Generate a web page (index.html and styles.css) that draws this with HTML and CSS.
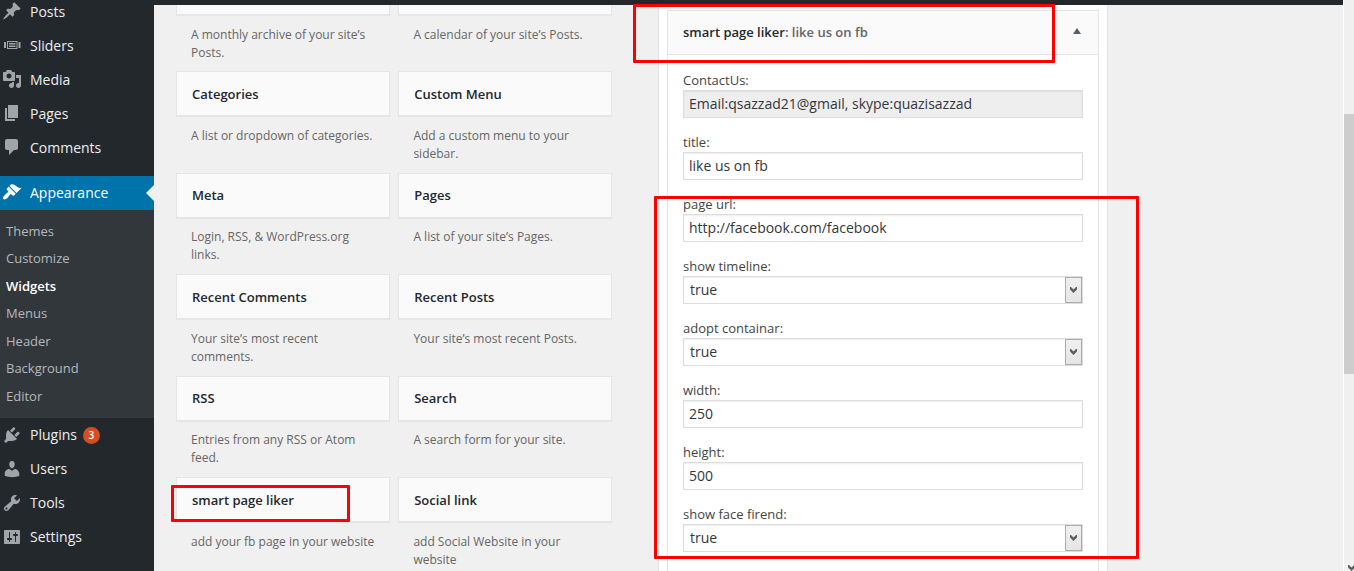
FILE: index.html
```
<!DOCTYPE html>
<html lang="en">
<head>
<meta charset="utf-8">
<title>Widgets</title>
<link rel="stylesheet" href="styles.css">
</head>
<body>
<div class="page">
  <nav class="sidebar">
    <ul class="menu upper">
      <li class="item"><svg viewBox="0 0 20 20"><path d="M10.44 3.02l1.82-1.82 6.36 6.35-1.83 1.82c-1.05-.68-2.48-.57-3.41.36l-.75.75c-.92.93-1.04 2.35-.35 3.41l-1.83 1.82-2.41-2.41-2.8 2.79c-.42.42-3.38 2.71-3.8 2.29s1.86-3.39 2.28-3.81l2.79-2.79L4.1 9.36l1.83-1.82c1.05.69 2.48.57 3.4-.36l.75-.75c.93-.92 1.05-2.35.36-3.41z"/></svg><span>Posts</span></li>
      <li class="item"><svg viewBox="0 0 20 20"><path fill-rule="evenodd" d="M2 7h2v6H2zM16.500 7h2v6h-2zM5 6h10.500v8H5zM6 7v6h8.500V7zM7 8h6.500v1H7zM7 9.500h6.500v1H7zM7 11h6.500v1H7z"/></svg><span>Sliders</span></li>
      <li class="item"><svg viewBox="0 0 20 20"><path d="M13 11V4c0-.55-.45-1-1-1h-1.670L9 1H5L3.670 3H2c-.55 0-1 .45-1 1v7c0 .55.45 1 1 1h10c.55 0 1-.45 1-1zM7 4.500c1.380 0 2.500 1.120 2.500 2.500S8.380 9.500 7 9.500 4.500 8.380 4.500 7 5.620 4.500 7 4.500zM14 6h5v10.500c0 1.380-1.120 2.500-2.500 2.500S14 17.880 14 16.500s1.120-2.500 2.500-2.500c.17 0 .34.02.5.05V9h-3V6zm-4 8.050V13h2v3.500c0 1.380-1.120 2.500-2.500 2.500S7 17.880 7 16.500 8.120 14 9.500 14c.17 0 .34.02.5.05z"/></svg><span>Media</span></li>
      <li class="item"><svg viewBox="0 0 20 20"><path d="M6 15V2h10v13H6zm-1 1h8v2H3V5h2v11z"/></svg><span>Pages</span></li>
      <li class="item"><svg viewBox="0 0 20 20"><path d="M5 2h9c1.100 0 2 .9 2 2v7c0 1.100-.9 2-2 2h-2l-5 5v-5H5c-1.100 0-2-.9-2-2V4c0-1.100.9-2 2-2z"/></svg><span>Comments</span></li>
      <li class="item current"><svg viewBox="0 0 20 20"><path d="M14.480 11.060L7.410 3.990l1.500-1.500c.5-.56 2.300-.47 3.510.32 1.210.8 1.430 1.280 2.910 2.100 1.180.64 2.450 1.260 4.450.85zm-.71.71L6.700 4.700 4.930 6.470c-.39.39-.39 1.020 0 1.410l1.060 1.060c.39.39.39 1.030 0 1.420-.6.6-1.430 1.110-2.210 1.690-.35.26-.7.53-1.010.84C1.430 14.230.4 16.080 1.400 17.070c.99 1 2.840-.03 4.180-1.360.31-.31.58-.66.85-1.020.57-.78 1.080-1.610 1.690-2.210.39-.39 1.020-.39 1.410 0l1.060 1.060c.39.39 1.020.39 1.410 0z"/></svg><span>Appearance</span><i class="notch"></i></li>
    </ul>
    <ul class="submenu">
      <li>Themes</li><li>Customize</li><li class="active">Widgets</li><li>Menus</li><li>Header</li><li>Background</li><li>Editor</li>
    </ul>
    <ul class="menu lower">
      <li class="item"><svg viewBox="0 0 20 20"><path d="M13.110 4.360L9.870 7.600 8 5.730l3.240-3.240c.35-.34 1.050-.2 1.560.32.52.51.66 1.210.31 1.550zm-8 1.770l.91-1.120 9.010 9.010-1.190.84c-.71.71-2.630 1.160-3.820 1.160H6.140L4.900 17.260c-.59.59-1.540.59-2.120 0-.59-.58-.59-1.530 0-2.120l1.240-1.240v-3.880c0-1.130.4-3.190 1.090-3.890zm7.260 3.970l3.240-3.240c.34-.35 1.040-.21 1.550.31.52.51.66 1.210.31 1.550l-3.240 3.250z"/></svg><span>Plugins</span><b class="count">3</b></li>
      <li class="item"><svg viewBox="0 0 20 20"><path d="M10 9.250c-2.270 0-2.730-3.440-2.730-3.440C7 4.020 7.820 2 9.970 2c2.160 0 2.980 2.020 2.710 3.810 0 0-.41 3.440-2.680 3.440zm0 2.570L12.720 10c2.390 0 4.520 2.330 4.520 4.530v2.490s-3.650 1.130-7.240 1.130c-3.650 0-7.240-1.130-7.240-1.130v-2.490c0-2.250 1.940-4.480 4.470-4.480z"/></svg><span>Users</span></li>
      <li class="item"><svg viewBox="0 0 20 20"><path d="M16.680 9.770c-1.340 1.340-3.300 1.670-4.950.99l-5.410 6.520c-.99.99-2.590.99-3.580 0s-.99-2.590 0-3.570l6.520-5.420c-.68-1.650-.35-3.610.99-4.950 1.280-1.280 3.120-1.620 4.720-1.060l-2.890 2.890 2.820 2.820 2.860-2.870c.53 1.580.18 3.390-1.080 4.650zM3.810 16.210c.4.39 1.040.39 1.430 0 .4-.4.4-1.040 0-1.430-.39-.4-1.030-.4-1.430 0-.39.39-.39 1.030 0 1.430z"/></svg><span>Tools</span></li>
      <li class="item"><svg viewBox="0 0 20 20"><path d="M18 16V4c0-.55-.45-1-1-1H3c-.55 0-1 .45-1 1v12c0 .55.45 1 1 1h14c.55 0 1-.45 1-1zM8 11h1c.55 0 1 .45 1 1s-.45 1-1 1H8v1.500c0 .28-.22.5-.5.5s-.5-.22-.5-.5V13H6c-.55 0-1-.45-1-1s.45-1 1-1h1V5.500c0-.28.22-.5.5-.5s.5.22.5.5V11zm5-2h-1c-.55 0-1-.45-1-1s.45-1 1-1h1V5.500c0-.28.22-.5.5-.5s.5.22.5.5V7h1c.55 0 1 .45 1 1s-.45 1-1 1h-1v5.500c0 .28-.22.5-.5.5s-.5-.22-.5-.5V9z"/></svg><span>Settings</span></li>
    </ul>
  </nav>
  <div class="body">
    <div class="topbar"></div>
    <div class="content">
      <section class="available">
        <div class="widget"><h3></h3><p>A monthly archive of your site’s<br>Posts.</p></div>
        <div class="widget"><h3></h3><p>A calendar of your site’s Posts.</p></div>
        <div class="widget"><h3>Categories</h3><p>A list or dropdown of categories.</p></div>
        <div class="widget"><h3>Custom Menu</h3><p>Add a custom menu to your<br>sidebar.</p></div>
        <div class="widget raised"><h3>Meta</h3><p>Login, RSS, &amp; WordPress.org<br>links.</p></div>
        <div class="widget raised"><h3>Pages</h3><p>A list of your site’s Pages.</p></div>
        <div class="widget"><h3>Recent Comments</h3><p>Your site’s most recent<br>comments.</p></div>
        <div class="widget"><h3>Recent Posts</h3><p>Your site’s most recent Posts.</p></div>
        <div class="widget raised"><h3>RSS</h3><p>Entries from any RSS or Atom<br>feed.</p></div>
        <div class="widget raised"><h3>Search</h3><p>A search form for your site.</p></div>
        <div class="widget"><h3>smart page liker</h3><p>add your fb page in your website</p></div>
        <div class="widget"><h3>Social link</h3><p>add Social Website in your<br>website</p></div>
      </section>
      <section class="area">
        <div class="open-widget">
          <header class="open-head"><h3>smart page liker<span>: like us on fb</span></h3><svg class="toggle" viewBox="0 0 8 6"><path d="M4 0L8 6H0z"/></svg></header>
          <div class="form">
            <div class="field"><label>ContactUs:</label><div class="input disabled">Email:qsazzad21@gmail, skype:quazisazzad</div></div>
            <div class="field"><label>title:</label><div class="input">like us on fb</div></div>
            <div class="field"><label>page url:</label><div class="input">http://facebook.com/facebook</div></div>
            <div class="field"><label>show timeline:</label><div class="input select"><span>true</span><div class="drop"><svg viewBox="0 0 7 6"><path d="M0 0h1l2.500 2.500L6 0h1v2.500L3.500 6 0 2.500z"/></svg></div></div></div>
            <div class="field"><label>adopt containar:</label><div class="input select"><span>true</span><div class="drop"><svg viewBox="0 0 7 6"><path d="M0 0h1l2.500 2.500L6 0h1v2.500L3.500 6 0 2.500z"/></svg></div></div></div>
            <div class="field"><label>width:</label><div class="input">250</div></div>
            <div class="field"><label>height:</label><div class="input">500</div></div>
            <div class="field"><label>show face firend:</label><div class="input select"><span>true</span><div class="drop"><svg viewBox="0 0 7 6"><path d="M0 0h1l2.500 2.500L6 0h1v2.500L3.500 6 0 2.500z"/></svg></div></div></div>
          </div>
        </div>
      </section>
    </div>
  </div>
  <div class="scrollbar"><div class="thumb"></div><svg class="down" viewBox="0 0 7 6"><path d="M0 0h1l2.500 2.500L6 0h1v2.500L3.500 6 0 2.500z"/></svg></div>
  <div class="mark mark-title"></div>
  <div class="mark mark-form"></div>
  <div class="mark mark-widget"></div>
</div>
</body>
</html>
```

FILE: styles.css
```
* { box-sizing: border-box; }
body {
  margin: 0;
  font-family: "Open Sans", sans-serif;
  background: #f0f0f0;
  color: #32373c;
}
h3, p, ul { margin: 0; padding: 0; }
ul { list-style: none; }
.page {
  position: relative;
  display: flex;
  width: 1354px;
  height: 571px;
  overflow: hidden;
}

/* Admin menu */
.sidebar {
  width: 154px;
  flex: none;
  background: #23282d;
  overflow: hidden;
}
.upper { margin-top: -5px; }
.item {
  position: relative;
  display: flex;
  align-items: center;
  height: 34px;
  padding-left: 2px;
  font-size: 14px;
  color: #eee;
}
.upper .item { padding-bottom: 2px; }
.lower .item span { padding-bottom: 2px; }
.item svg {
  width: 20px;
  height: 20px;
  margin-right: 8px;
  fill: #a0a5aa;
}
.item.current { margin-top: 11px; background: #0073aa; color: #fff; }
.item.current svg { fill: #fff; }
.notch {
  position: absolute;
  right: 0;
  top: 9px;
  border: 8px solid transparent;
  border-left: 0;
  border-right-color: #f0f0f0;
}
.count {
  width: 17px;
  height: 17px;
  margin-left: 6px;
  border-radius: 50%;
  background: #d54e21;
  color: #fff;
  font-size: 10px;
  font-weight: 600;
  line-height: 17px;
  text-align: center;
}
.submenu {
  height: 208px;
  padding: 7.5px 6px 0;
  background: #32373c;
  color: #b4b9be;
  font-size: 13px;
  line-height: 27.6px;
}
.submenu .active { color: #fff; font-weight: 600; }

/* Main column */
.body { width: 1189px; flex: none; }
.topbar { height: 5px; background: #23282d; }
.content {
  display: flex;
  height: 566px;
  padding-left: 22px;
  overflow: hidden;
}
.available {
  display: grid;
  flex: none;
  width: 436px;
  margin-top: -35.5px;
  grid-template-columns: 214px 214px;
  grid-auto-rows: 101.6px;
  column-gap: 8px;
}
.widget h3 {
  height: 45px;
  padding: 0 15px;
  border: 1px solid #e5e5e5;
  background: #fafafa;
  box-shadow: 0 1px 1px rgba(0, 0, 0, .04);
  font-size: 13px;
  font-weight: 600;
  line-height: 44px;
  color: #23282d;
}
.widget.raised h3 { line-height: 43px; }
.widget p {
  padding: 10.6px 0 0 15px;
  font-size: 12px;
  line-height: 18px;
  color: #666;
  white-space: nowrap;
}
.widget h3:empty + p { padding-top: 11.4px; }
.widget:nth-child(even) p { padding-left: 15.4px; }
.widget:nth-child(even) h3 { padding-left: 15.2px; }
.area {
  width: 450px;
  margin-left: 46px;
  padding: 5px 8px 0;
  background: #fff;
  border: solid #e5e5e5;
  border-width: 0 1px;
}
.open-widget { height: 600px; border: 1px solid #e5e5e5; }
.open-head {
  display: flex;
  justify-content: space-between;
  align-items: center;
  height: 44px;
  padding: 0 17px 2px 15px;
  border-bottom: 1px solid #e5e5e5;
  background: #fafafa;
}
.open-head h3 { font-size: 13px; font-weight: 600; color: #23282d; }
.open-head span { color: #666; }
.toggle { width: 8px; height: 6px; margin-top: -1px; fill: #555d66; }
.form { padding: 15px 15px 0; }
.field { height: 62px; }
.field label {
  display: block;
  height: 20px;
  font-size: 13px;
  line-height: 20px;
  color: #444;
}
.input {
  height: 28px;
  padding: 0 5px;
  border: 1px solid #ddd;
  background: #fff;
  box-shadow: inset 0 1px 2px rgba(0, 0, 0, .07);
  font-size: 14px;
  line-height: 26px;
}
.input.disabled { background: #eee; }
.select {
  display: flex;
  justify-content: space-between;
  padding: 0 0 0 6px;
}
.drop {
  display: flex;
  align-items: center;
  justify-content: center;
  width: 17px;
  height: 26px;
  border: 1px solid #acacac;
  background: linear-gradient(#f0f0f0, #e5e5e5);
}
.drop svg { width: 7px; height: 6px; fill: #606060; }

/* Page scrollbar */
.scrollbar {
  display: flex;
  flex-direction: column;
  justify-content: space-between;
  width: 11px;
  padding-top: 114px;
  border-left: 1px solid #fff;
  background: #f0f0f0;
}
.thumb { height: 260px; background: #cdcdcd; }
.down { width: 7px; height: 6px; margin-left: 4px; flex: none; fill: #606060; }

/* Highlight outlines */
.mark { position: absolute; border: 3px solid #f00; border-radius: 1px; }
.mark-title { left: 633px; top: 4px; width: 422px; height: 59px; }
.mark-form { left: 654px; top: 196px; width: 485px; height: 363px; }
.mark-widget { left: 171px; top: 485px; width: 179px; height: 37px; }
```
